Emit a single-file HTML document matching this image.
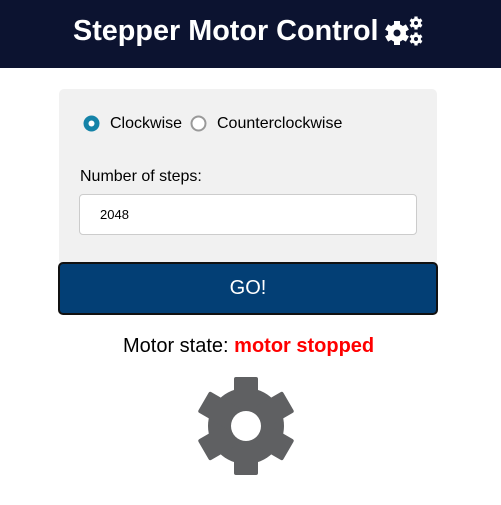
<!DOCTYPE html>
<html><head><meta charset="utf-8"><style>
*{margin:0;padding:0;box-sizing:border-box}
body{width:501px;height:505px;background:#fff;font-family:"Liberation Sans",Arial,sans-serif;position:relative;overflow:hidden}
.hdr{position:absolute;left:0;top:0;width:501px;height:68px;background:#0c1330;color:#fff;font-weight:bold;font-size:28.8px}
.hdr span{position:absolute;left:73px;top:15px;white-space:nowrap}
.card{position:absolute;left:59px;top:89px;width:378px;height:176px;background:#f1f1f1;border-radius:5px}
.abs{position:absolute;white-space:nowrap;font-size:16px;color:#000}
.input{position:absolute;left:79px;top:194px;width:338px;height:41px;background:#fff;border:1px solid #ccc;border-radius:4px;font-size:13px;padding:12px 0 0 20px}
.btn{position:absolute;left:58px;top:262px;width:380px;height:53px;background:#033f75;border:2px solid #111;border-radius:5px;color:#fff;font-size:20px;text-align:center;line-height:48px}
</style></head><body>
<div class="hdr"><span>Stepper Motor Control</span>
<svg style="position:absolute;left:384px;top:16px" width="42" height="32" viewBox="384 16 42 32">
<g fill="#fff">
<g transform="translate(397,33)"><circle r="9"/><rect x="-3" y="-12" width="6" height="24"/><rect x="-3" y="-12" width="6" height="24" transform="rotate(60)"/><rect x="-3" y="-12" width="6" height="24" transform="rotate(120)"/><circle r="3.5" fill="#0c1330"/></g>
<g transform="translate(416,23)"><circle r="5"/><rect x="-1.6" y="-6.5" width="3.2" height="13"/><rect x="-1.6" y="-6.5" width="3.2" height="13" transform="rotate(60)"/><rect x="-1.6" y="-6.5" width="3.2" height="13" transform="rotate(120)"/><circle r="2" fill="#0c1330"/></g>
<g transform="translate(416,39)"><circle r="5"/><rect x="-1.6" y="-6.5" width="3.2" height="13"/><rect x="-1.6" y="-6.5" width="3.2" height="13" transform="rotate(60)"/><rect x="-1.6" y="-6.5" width="3.2" height="13" transform="rotate(120)"/><circle r="2" fill="#0c1330"/></g>
</g></svg></div>
<div class="card"></div>
<svg style="position:absolute;left:83px;top:115px" width="17" height="17"><circle cx="8.5" cy="8.5" r="8" fill="#1583a8"/><circle cx="8.5" cy="8.5" r="3" fill="#fff"/></svg>
<div class="abs" style="left:110px;top:115px">Clockwise</div>
<svg style="position:absolute;left:190px;top:115px" width="17" height="17"><circle cx="8.5" cy="8.5" r="7" fill="#fff" stroke="#999" stroke-width="2"/></svg>
<div class="abs" style="left:217px;top:115px">Counterclockwise</div>
<div class="abs" style="left:80px;top:168px">Number of steps:</div>
<div class="input">2048</div>
<div class="btn">GO!</div>
<div class="abs" style="left:123px;top:335px;font-size:20px">Motor state: <b style="color:#f00">motor stopped</b></div>
<svg style="position:absolute;left:196px;top:376px" width="100" height="100" viewBox="-50 -50 100 100">
<g fill="#5f6062">
<circle r="38"/>
<rect x="-12" y="-49" width="24" height="98" rx="2"/>
<rect x="-12" y="-49" width="24" height="98" rx="2" transform="rotate(60)"/>
<rect x="-12" y="-49" width="24" height="98" rx="2" transform="rotate(120)"/>
</g><circle r="15" fill="#fff"/></svg>
</body></html>
